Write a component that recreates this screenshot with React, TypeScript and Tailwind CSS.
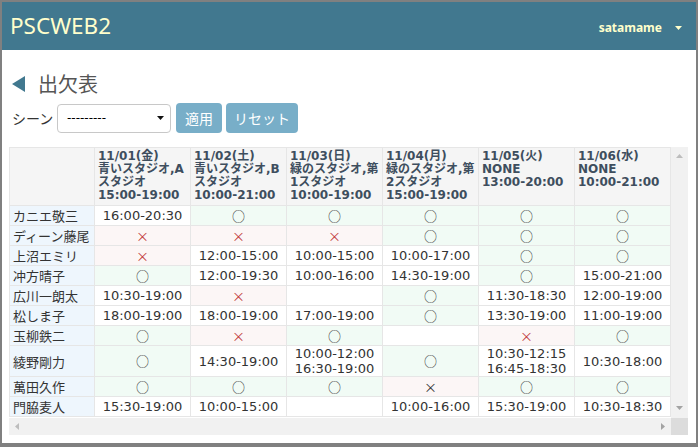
import React from "react";

type Cell =
  | { k: "o" }
  | { k: "x" }
  | { k: "xd" }
  | { k: "e" }
  | { k: "t"; v: string[] };

const O: Cell = { k: "o" };
const X: Cell = { k: "x" };
const XD: Cell = { k: "xd" };
const E: Cell = { k: "e" };
const T = (...v: string[]): Cell => ({ k: "t", v });

const cols = [
  { d: "11/01(金)", lines: ["青いスタジオ,A", "スタジオ"], t: "15:00-19:00" },
  { d: "11/02(土)", lines: ["青いスタジオ,B", "スタジオ"], t: "10:00-21:00" },
  { d: "11/03(日)", lines: ["緑のスタジオ,第", "1スタジオ"], t: "10:00-19:00" },
  { d: "11/04(月)", lines: ["緑のスタジオ,第", "2スタジオ"], t: "15:00-19:00" },
  { d: "11/05(火)", lines: ["NONE"], t: "13:00-20:00" },
  { d: "11/06(水)", lines: ["NONE"], t: "10:00-21:00" },
];

const rows: { name: string; cells: Cell[] }[] = [
  { name: "カニエ敬三", cells: [T("16:00-20:30"), O, O, O, O, O] },
  { name: "ディーン藤尾", cells: [X, X, X, O, O, O] },
  { name: "上沼エミリ", cells: [X, T("12:00-15:00"), T("10:00-15:00"), T("10:00-17:00"), O, O] },
  { name: "冲方晴子", cells: [O, T("12:00-19:30"), T("10:00-16:00"), T("14:30-19:00"), O, T("15:00-21:00")] },
  { name: "広川一朗太", cells: [T("10:30-19:00"), X, E, O, T("11:30-18:30"), T("12:00-19:00")] },
  { name: "松しま子", cells: [T("18:00-19:00"), T("18:00-19:00"), T("17:00-19:00"), O, T("13:30-19:00"), T("11:00-19:00")] },
  { name: "玉柳鉄二", cells: [O, X, O, E, X, O] },
  {
    name: "綾野剛力",
    cells: [O, T("14:30-19:00"), T("10:00-12:00", "16:30-19:00"), O, T("10:30-12:15", "16:45-18:30"), T("10:30-18:00")],
  },
  { name: "萬田久作", cells: [O, O, O, XD, O, O] },
  { name: "門脇麦人", cells: [T("15:30-19:00"), T("10:00-15:00"), E, T("10:00-16:00"), T("15:30-19:00"), T("10:30-18:30")] },
];

function DataCell({ c }: { c: Cell }) {
  const base = "border border-[#e6e6e6] text-center align-middle px-[2px] py-0 whitespace-nowrap";
  if (c.k === "o")
    return (
      <td className={`${base} bg-[#f1fbf5] text-[#333]`}>
        <span className="font-['Noto_Sans_CJK_JP',sans-serif] text-[13px]">○</span>
      </td>
    );
  if (c.k === "x")
    return (
      <td className={`${base} bg-[#fcf6f6] text-[#c23b3b]`}>
        <span className="font-['Noto_Sans_CJK_JP',sans-serif] text-[13px]">×</span>
      </td>
    );
  if (c.k === "xd")
    return (
      <td className={`${base} bg-[#fcf6f6] text-[#333]`}>
        <span className="font-['Noto_Sans_CJK_JP',sans-serif] text-[13px]">×</span>
      </td>
    );
  if (c.k === "e") return <td className={`${base} bg-white`} />;
  return (
    <td className={`${base} bg-white text-[#333]`}>
      {c.v.map((s, i) => (
        <div key={i}>{s}</div>
      ))}
    </td>
  );
}

function Arrow({ dir, color }: { dir: "up" | "down" | "left" | "right"; color: string }) {
  const pts =
    dir === "up"
      ? "0,4 7,4 3.5,0"
      : dir === "down"
      ? "0,0 7,0 3.5,4"
      : dir === "left"
      ? "4,0 4,7 0,3.5"
      : "0,0 0,7 4,3.5";
  const w = dir === "up" || dir === "down" ? 7 : 4;
  const h = dir === "up" || dir === "down" ? 4 : 7;
  return (
    <svg width={w} height={h} viewBox={`0 0 ${w} ${h}`}>
      <polygon points={pts} fill={color} />
    </svg>
  );
}

export default function App() {
  return (
    <div className="w-[698px] h-[447px] bg-[#808080] pt-[2px] px-[2px] pb-[4px] font-['DejaVu_Sans','Noto_Sans_CJK_JP',sans-serif]">
      <div className="w-full h-full bg-white flex flex-col">
        <header className="h-[48px] bg-[#41788f] flex items-center justify-between pl-[8px] pr-[14px]">
          <div className="font-['Noto_Sans',sans-serif] text-[22.5px] text-[#ffffcc] leading-none">PSCWEB2</div>
          <div className="flex items-center gap-[13px] pt-[4px]">
            <span className="font-['Noto_Sans',sans-serif] font-bold text-[12px] text-[#ffffcc]">satamame</span>
            <Arrow dir="down" color="#ffffcc" />
          </div>
        </header>

        <div className="pl-[7px] pr-[8px] flex flex-col">
          <div className="flex items-center h-[34px] mt-[17px] pl-[3px]">
            <svg width="14" height="16" viewBox="0 0 14 16">
              <polygon points="13,0 13,16 0,8" fill="#41788f" />
            </svg>
            <span className="ml-[12px] font-['Noto_Sans_CJK_JP',sans-serif] text-[20px] text-[#555] leading-none">出欠表</span>
          </div>

          <div className="flex items-center mt-[2px] pl-[3px]">
            <span className="font-['Noto_Sans_CJK_JP',sans-serif] text-[14px] text-[#333] w-[45px]">シーン</span>
            <div className="w-[114px] h-[29px] border border-[#c8c8c8] rounded-[4px] flex items-center justify-between pl-[9px] pr-[6px]">
              <span className="text-[12px] text-black">---------</span>
              <Arrow dir="down" color="#111" />
            </div>
            <button className="ml-[5px] h-[30px] w-[46px] rounded-[4px] bg-[#78aec8] text-white text-[14px] font-['Noto_Sans_CJK_JP',sans-serif]">
              適用
            </button>
            <button className="ml-[4px] h-[30px] w-[72px] rounded-[4px] bg-[#78aec8] text-white text-[14px] font-['Noto_Sans_CJK_JP',sans-serif]">
              リセット
            </button>
          </div>

          <div className="mt-[14px] flex flex-col">
            <div className="flex">
              <div className="w-[662px] h-[271px] overflow-hidden">
                <table className="table-fixed border-collapse w-[662px] text-[13px] leading-[15px]">
                  <colgroup>
                    <col className="w-[85px]" />
                    {cols.map((_, i) => (
                      <col key={i} className="w-[96px]" />
                    ))}
                  </colgroup>
                  <thead>
                    <tr>
                      <th className="border border-[#e6e6e6] bg-[#f5f5f5]" />
                      {cols.map((c, i) => (
                        <th
                          key={i}
                          className="border border-[#e6e6e6] bg-[#f5f5f5] text-left align-top pl-[3px] pr-0 pt-[2px] pb-[3px] text-[12px] leading-[13px] font-bold text-[#3e4e5e] whitespace-nowrap"
                        >
                          <div>{c.d}</div>
                          {c.lines.map((l, j) => (
                            <div key={j}>{l}</div>
                          ))}
                          <div>{c.t}</div>
                          {c.lines.length === 1 && <div>&nbsp;</div>}
                        </th>
                      ))}
                    </tr>
                  </thead>
                  <tbody>
                    {rows.map((r, i) => (
                      <tr key={i} className="h-[20px]">
                        <td className="border border-[#e6e6e6] bg-[#eef6fd] text-[#333] text-left pl-[3px] py-0 whitespace-nowrap font-['Noto_Sans_CJK_JP',sans-serif]">
                          {r.name}
                        </td>
                        {r.cells.map((c, j) => (
                          <DataCell key={j} c={c} />
                        ))}
                      </tr>
                    ))}
                  </tbody>
                </table>
              </div>
              <div className="w-[17px] h-[271px] bg-[#f1f1f1] flex flex-col items-center justify-between pt-[7px] pb-[8px]">
                <Arrow dir="up" color="#bdbdbd" />
                <Arrow dir="down" color="#a3a3a3" />
              </div>
            </div>
            <div className="flex">
              <div className="w-[662px] h-[17px] bg-[#f1f1f1] flex items-center justify-between pl-[6px] pr-[6px]">
                <Arrow dir="left" color="#bdbdbd" />
                <Arrow dir="right" color="#a3a3a3" />
              </div>
              <div className="w-[17px] h-[17px] bg-[#dcdcdc]" />
            </div>
          </div>
        </div>
      </div>
    </div>
  );
}
